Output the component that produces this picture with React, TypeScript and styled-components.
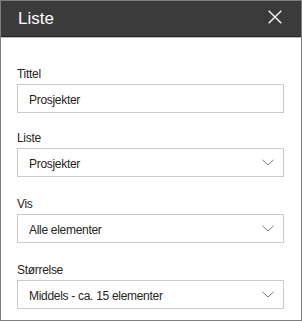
import styled, { createGlobalStyle } from 'styled-components';

const GlobalStyle = createGlobalStyle`
  html, body {
    margin: 0;
    padding: 0;
    background: #ffffff;
  }
  * {
    box-sizing: border-box;
  }
`;

const Panel = styled.div`
  width: 302px;
  height: 321px;
  border: 1px solid #7f7f7f;
  background: #ffffff;
  display: flex;
  flex-direction: column;
  font-family: "Liberation Sans", Arial, sans-serif;
`;

const Header = styled.div`
  height: 36px;
  flex: none;
  background: #3b3b3b;
  border-bottom: 1px solid #262626;
  display: flex;
  align-items: center;
  justify-content: space-between;
  padding: 0 19px 0 17px;
`;

const Title = styled.h1`
  margin: 0;
  font-weight: 400;
  font-size: 17px;
  color: #ffffff;
`;

const CloseButton = styled.button`
  border: none;
  background: transparent;
  padding: 0;
  width: 14px;
  height: 14px;
  margin-top: -3px;
  display: flex;
  cursor: pointer;
`;

const Body = styled.div`
  flex: 1;
  border-top: 1px solid #b9b9b9;
  padding: 28px 17px 0 16px;
  display: flex;
  flex-direction: column;
`;

const Field = styled.div<{ $gap: number }>`
  display: flex;
  flex-direction: column;
  margin-bottom: ${(p) => p.$gap}px;
`;

const Label = styled.label`
  font-size: 12px;
  letter-spacing: -0.3px;
  line-height: 16px;
  color: #252423;
  margin-bottom: 2px;
`;

const Box = styled.div`
  height: 29px;
  border: 1px solid #cbcbcb;
  display: flex;
  align-items: center;
  justify-content: space-between;
  padding: 2px 9px 0 11px;
  font-size: 12px;
  letter-spacing: -0.3px;
  color: #252423;
  background: #ffffff;
`;

const Chevron = styled.svg`
  width: 12px;
  height: 7px;
  flex: none;
  margin-top: -2px;
`;

function ChevronDown() {
  return (
    <Chevron viewBox="0 0 12 7">
      <path d="M0.5 0.8 L6 6 L11.5 0.8" fill="none" stroke="#7a7a7a" strokeWidth="1" />
    </Chevron>
  );
}

type Item = { label: string; value: string; select: boolean; gap: number };

const fields: Item[] = [
  { label: 'Tittel', value: 'Prosjekter', select: false, gap: 17 },
  { label: 'Liste', value: 'Prosjekter', select: true, gap: 19 },
  { label: 'Vis', value: 'Alle elementer', select: true, gap: 19 },
  { label: 'Størrelse', value: 'Middels - ca. 15 elementer', select: true, gap: 0 },
];

export default function App() {
  return (
    <>
      <GlobalStyle />
      <Panel>
        <Header>
          <Title>Liste</Title>
          <CloseButton aria-label="Lukk">
            <svg width="14" height="14" viewBox="0 0 14 14">
              <path d="M0.7 0.7 L13.3 13.3 M13.3 0.7 L0.7 13.3" stroke="#f0f0f0" strokeWidth="1.5" />
            </svg>
          </CloseButton>
        </Header>
        <Body>
          {fields.map((f) => (
            <Field key={f.label} $gap={f.gap}>
              <Label>{f.label}</Label>
              <Box>
                <span>{f.value}</span>
                {f.select && <ChevronDown />}
              </Box>
            </Field>
          ))}
        </Body>
      </Panel>
    </>
  );
}
